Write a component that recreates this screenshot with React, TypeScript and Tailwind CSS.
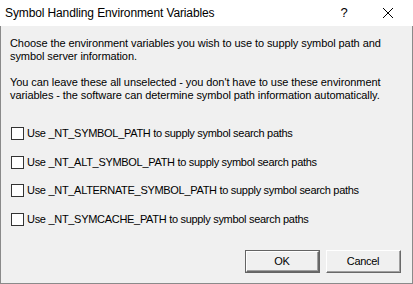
import React from "react";

const rows = [
  "Use _NT_SYMBOL_PATH to supply symbol search paths",
  "Use _NT_ALT_SYMBOL_PATH to supply symbol search paths",
  "Use _NT_ALTERNATE_SYMBOL_PATH to supply symbol search paths",
  "Use _NT_SYMCACHE_PATH to supply symbol search paths",
];
const rowMt = ["mt-[25px]", "mt-[16px]", "mt-[15px]", "mt-[16px]"];

function ClassicButton({ label, isDefault }: { label: string; isDefault?: boolean }) {
  const inner = (
    <div className="w-full h-full border-t border-l border-t-white border-l-white border-b border-r border-b-[#696969] border-r-[#696969]">
      <div className="w-full h-full border-b border-r border-b-[#a0a0a0] border-r-[#a0a0a0] flex items-center justify-center bg-[#f0f0f0] tracking-[-0.3px]">
        {label}
      </div>
    </div>
  );
  return (
    <div className={"w-[75px] h-[23px] " + (isDefault ? "border border-[#646464]" : "")}>{inner}</div>
  );
}

export default function App() {
  return (
    <div
      className="w-[413px] h-[284px] flex flex-col text-black bg-[#f0f0f0]"
      style={{ fontFamily: '"Liberation Sans", Arial, sans-serif' }}
    >
      <div className="h-[26px] bg-white flex items-center pl-[5px] text-[12px] tracking-[-0.12px] shrink-0">
        <span className="flex-1">Symbol Handling Environment Variables</span>
        <span className="w-[14px] text-center mr-[31px] text-[13px]">?</span>
        <svg width="12" height="12" viewBox="0 0 12 12" className="mr-[19px]">
          <path d="M1 1 L11 11 M11 1 L1 11" stroke="#000" strokeWidth="1" fill="none" />
        </svg>
      </div>
      <div className="flex-1 flex flex-col border-l border-r border-b border-[#8a8a8a] text-[11px] leading-[13px] px-[9px] pt-[11px]">
        <p className="tracking-[-0.08px]">
          Choose the environment variables you wish to use to supply symbol path and
          <br />
          symbol server information.
        </p>
        <p className="mt-[13px] tracking-[-0.08px]">
          You can leave these all unselected - you don't have to use these environment
          <br />
          variables - the software can determine symbol path information automatically.
        </p>
        {rows.map((r, i) => (
          <div key={i} className={"flex items-center h-[13px] pl-[1px] " + rowMt[i]}>
            <div className="w-[13px] h-[13px] border border-[#333333] bg-white shrink-0" />
            <span className="ml-[3px] tracking-[-0.3px]">{r}</span>
          </div>
        ))}
        <div className="flex justify-end gap-[6px] mt-[24px] pr-[2px]">
          <ClassicButton label="OK" isDefault />
          <ClassicButton label="Cancel" />
        </div>
      </div>
    </div>
  );
}
